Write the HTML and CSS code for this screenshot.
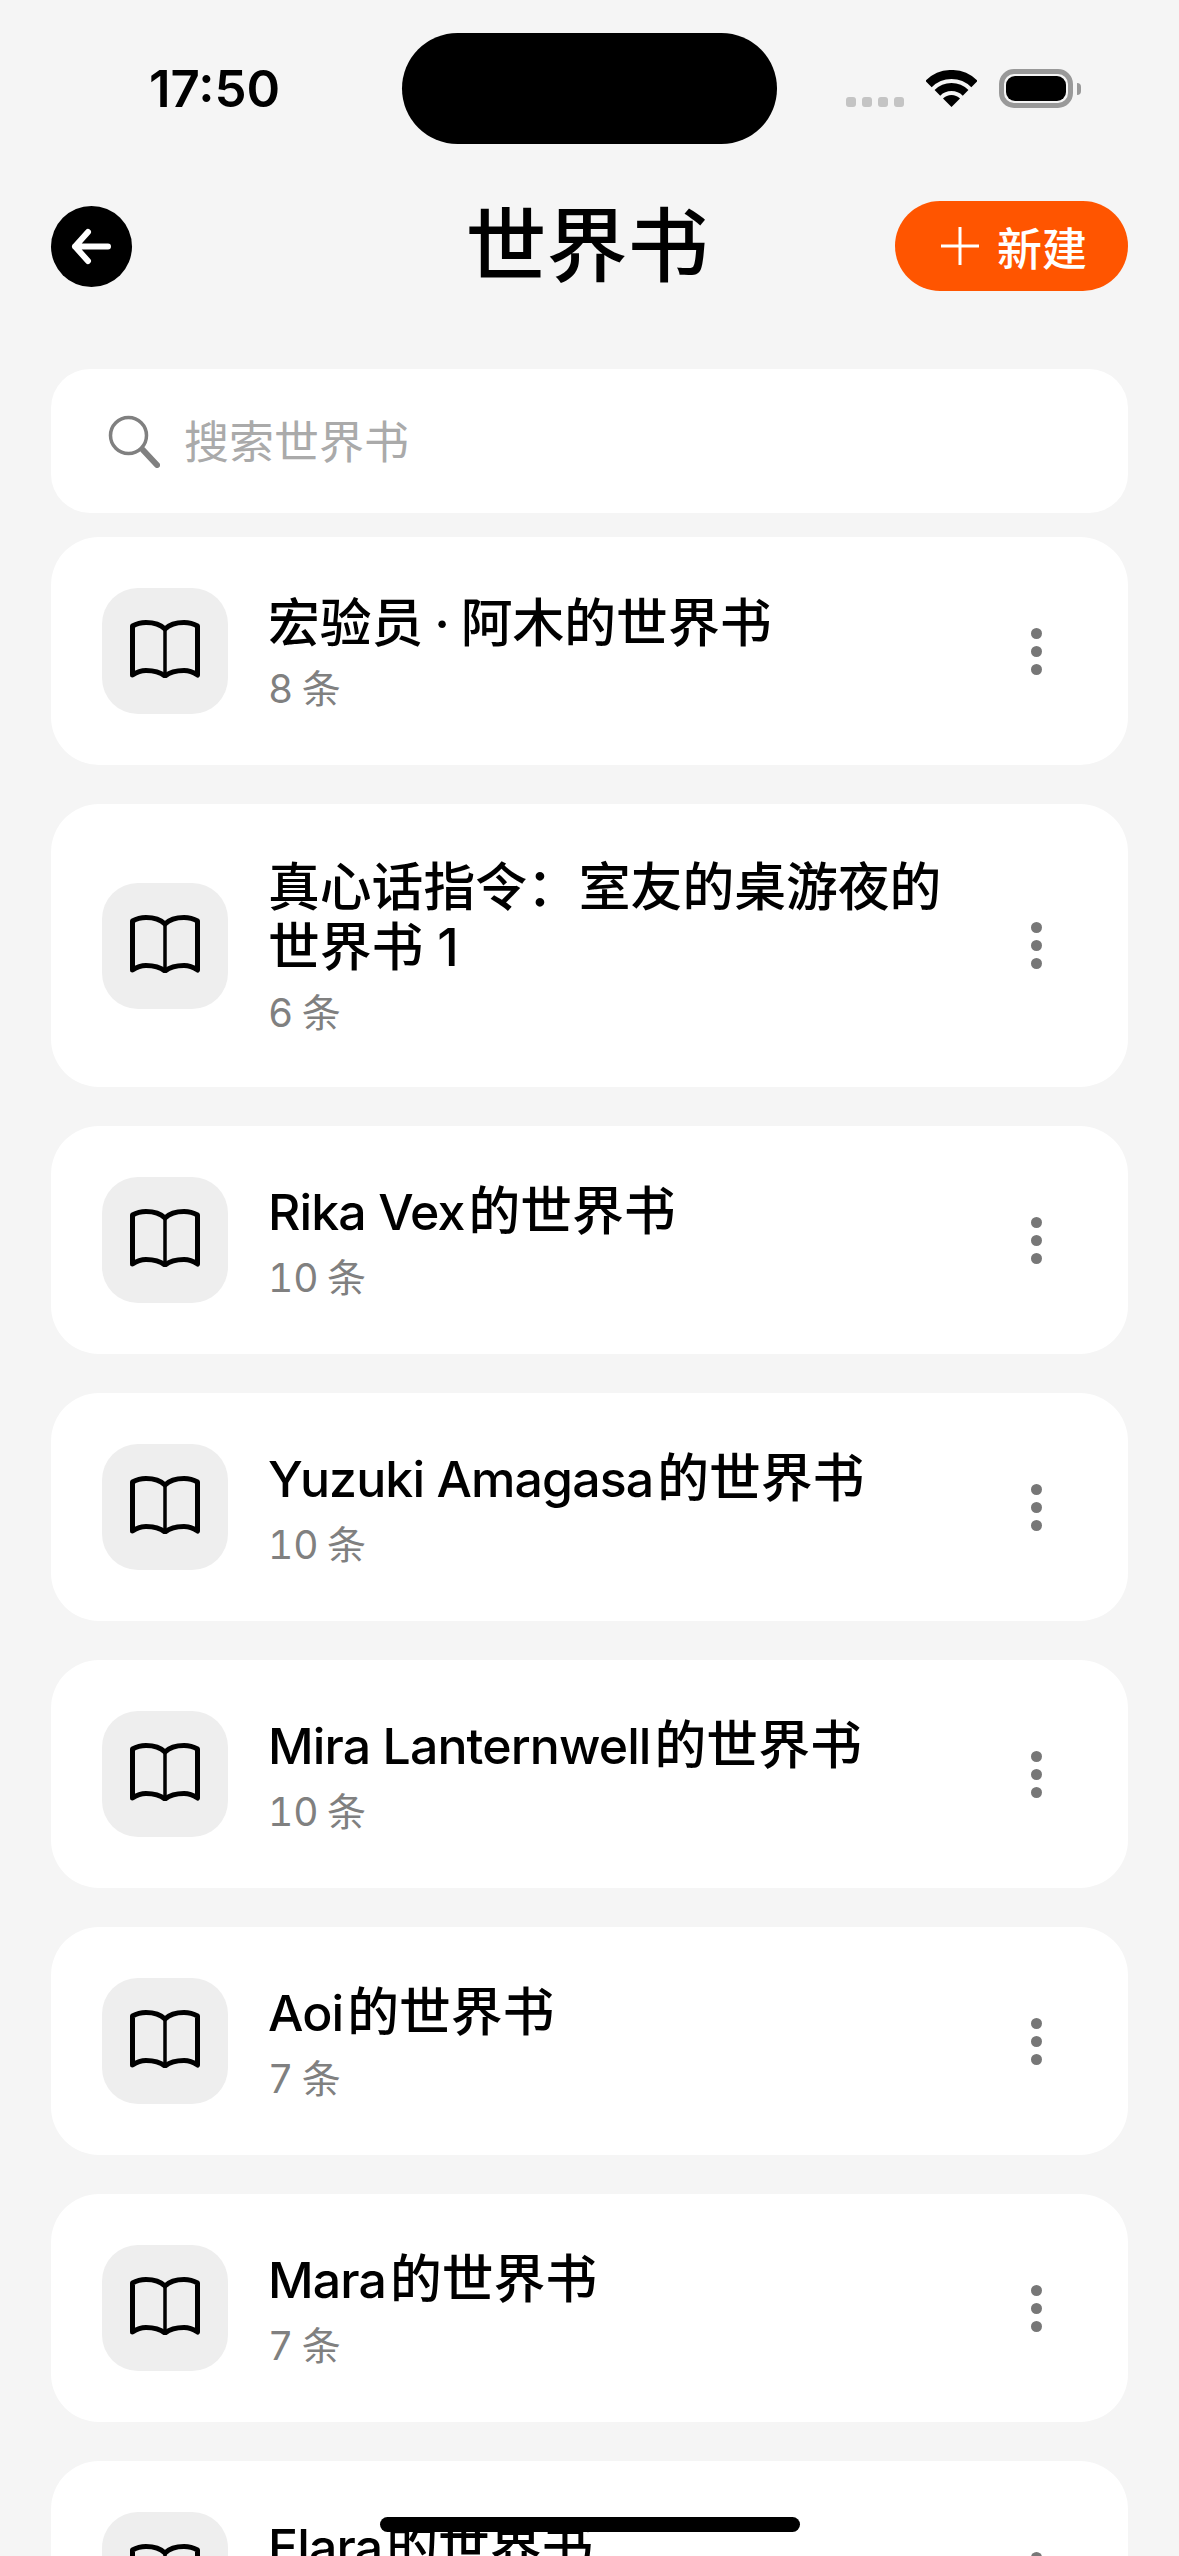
FILE: index.html
```html
<!DOCTYPE html>
<html lang="zh-CN">
<head>
    <meta charset="UTF-8">
    <title>世界书</title>
    <link rel="stylesheet" href="styles.css">
</head>
<body>
    <svg class="defs" width="0" height="0">
        <symbol id="book" viewBox="0 0 70 58">
            <path d="M35 9C30 4 22 2.5 16 2.5C11 2.5 6 4 2.5 6V55C7 52 11 50.5 16 50.5C23 50.5 30 52 35 56C40 52 47 50.5 54 50.5C59 50.5 63 52 67.5 55V6C64 4 59 2.5 54 2.5C48 2.5 40 4 35 9Z" fill="none" stroke="#000" stroke-width="5" stroke-linejoin="round"/>
            <path d="M35 9V55" fill="none" stroke="#000" stroke-width="3.5"/>
        </symbol>
    </svg>

    <div class="status-bar">
        <div class="time">17:50</div>
        <div class="island"></div>
        <div class="status-icons">
            <div class="signal"><span></span><span></span><span></span><span></span></div>
            <svg class="wifi" width="51" height="37" viewBox="0 0 51 37">
                <path d="M2.5 14A32.5 32.5 0 0 1 48.5 14" fill="none" stroke="#000" stroke-width="9"/>
                <path d="M11.4 22.9A20 20 0 0 1 39.6 22.9" fill="none" stroke="#000" stroke-width="8"/>
                <path d="M25.5 37L17 28.5A12 12 0 0 1 34 28.5Z"/>
            </svg>
            <div class="battery"><div class="battery-level"></div></div>
            <div class="battery-nub"></div>
        </div>
    </div>

    <header class="header">
        <button class="back">
            <svg width="81" height="81" viewBox="0 0 81 81">
                <path d="M57 40.5H24M37 26L24 40.5L37 55" fill="none" stroke="#fff" stroke-width="6" stroke-linecap="round" stroke-linejoin="round"/>
            </svg>
        </button>
        <h1>世界书</h1>
        <button class="new-btn">
            <svg width="38" height="38" viewBox="0 0 38 38">
                <path d="M19 0V38M0 19H38" fill="none" stroke="#fff" stroke-width="3"/>
            </svg>
            <span>新建</span>
        </button>
    </header>

    <div class="search">
        <svg width="52" height="53" viewBox="0 0 52 53">
            <circle cx="20.5" cy="20.5" r="18" fill="none" stroke="#808080" stroke-width="3.5"/>
            <path d="M35 35L49 50" fill="none" stroke="#808080" stroke-width="6" stroke-linecap="round"/>
        </svg>
        <span>搜索世界书</span>
    </div>

    <main class="list">
        <div class="card">
            <div class="book-icon"><svg><use href="#book"/></svg></div>
            <div class="info">
                <div class="name spaced">宏验员 · 阿木的世界书</div>
                <div class="count">8 条</div>
            </div>
            <div class="more"><span></span><span></span><span></span></div>
        </div>
        <div class="card">
            <div class="book-icon"><svg><use href="#book"/></svg></div>
            <div class="info">
                <div class="name">真心话指令：室友的桌游夜的世界书 1</div>
                <div class="count">6 条</div>
            </div>
            <div class="more"><span></span><span></span><span></span></div>
        </div>
        <div class="card">
            <div class="book-icon"><svg><use href="#book"/></svg></div>
            <div class="info">
                <div class="name"><span class="latin">Rika Vex</span>的世界书</div>
                <div class="count">10 条</div>
            </div>
            <div class="more"><span></span><span></span><span></span></div>
        </div>
        <div class="card">
            <div class="book-icon"><svg><use href="#book"/></svg></div>
            <div class="info">
                <div class="name"><span class="latin">Yuzuki Amagasa</span>的世界书</div>
                <div class="count">10 条</div>
            </div>
            <div class="more"><span></span><span></span><span></span></div>
        </div>
        <div class="card">
            <div class="book-icon"><svg><use href="#book"/></svg></div>
            <div class="info">
                <div class="name"><span class="latin">Mira Lanternwell</span>的世界书</div>
                <div class="count">10 条</div>
            </div>
            <div class="more"><span></span><span></span><span></span></div>
        </div>
        <div class="card">
            <div class="book-icon"><svg><use href="#book"/></svg></div>
            <div class="info">
                <div class="name"><span class="latin">Aoi</span>的世界书</div>
                <div class="count">7 条</div>
            </div>
            <div class="more"><span></span><span></span><span></span></div>
        </div>
        <div class="card">
            <div class="book-icon"><svg><use href="#book"/></svg></div>
            <div class="info">
                <div class="name"><span class="latin">Mara</span>的世界书</div>
                <div class="count">7 条</div>
            </div>
            <div class="more"><span></span><span></span><span></span></div>
        </div>
        <div class="card">
            <div class="book-icon"><svg><use href="#book"/></svg></div>
            <div class="info">
                <div class="name"><span class="latin">Elara</span>的世界书</div>
                <div class="count">7 条</div>
            </div>
            <div class="more"><span></span><span></span><span></span></div>
        </div>
    </main>

    <div class="home-bar"></div>
</body>
</html>
```

FILE: styles.css
```css
html, body {
    margin: 0;
    height: 2556px;
    overflow: hidden;
}

body {
    position: relative;
    background: #f5f5f5;
    color: #000;
    font-family: Inter, "Noto Sans CJK SC", sans-serif;
}

.defs {
    display: block;
    height: 0;
}

/* 状态栏 */
.status-bar {
    display: grid;
    grid-template-columns: 402px 375px 1fr;
    align-items: center;
    height: 111px;
    padding-top: 33px;
}

.time {
    padding-left: 149px;
    font-size: 51px;
    font-weight: 600;
    line-height: 1;
}

.island {
    height: 111px;
    border-radius: 56px;
    background: #000;
}

.status-icons {
    display: flex;
    align-items: center;
    padding-left: 69px;
}

.signal {
    display: flex;
    gap: 6px;
    align-self: flex-end;
    margin: 0 22px 1px 0;
}

.signal span {
    width: 10px;
    height: 10px;
    border-radius: 3px;
    background: #c4c4c4;
}

.wifi {
    margin-right: 22px;
}

.battery {
    box-sizing: border-box;
    width: 74px;
    height: 39px;
    padding: 2px;
    border: 5px solid #999;
    border-radius: 15px;
}

.battery-level {
    height: 100%;
    border-radius: 9px;
    background: #000;
}

.battery-nub {
    width: 4px;
    height: 12px;
    margin-left: 4px;
    border-radius: 0 4px 4px 0;
    background: #999;
}

/* 顶部导航 */
.header {
    display: grid;
    grid-template-columns: 1fr auto 1fr;
    align-items: center;
    height: 90px;
    margin-top: 57px;
    padding: 0 51px;
}

.header h1 {
    margin: 0 5px 0 0;
    font-size: 81px;
    font-weight: 500;
    line-height: 90px;
}

button {
    padding: 0;
    border: 0;
    font-family: inherit;
}

.back {
    display: flex;
    width: 81px;
    height: 81px;
    border-radius: 50%;
    background: #000;
}

.new-btn {
    display: flex;
    align-items: center;
    gap: 18px;
    justify-self: end;
    height: 90px;
    padding: 0 41px 0 46px;
    border-radius: 45px;
    background: #ff5500;
    color: #fff;
    font-size: 45px;
    font-weight: 500;
}

/* 搜索框 */
.search {
    display: flex;
    align-items: center;
    gap: 24px;
    height: 144px;
    margin: 78px 51px 24px;
    padding-left: 57px;
    border-radius: 39px;
    background: #fff;
    color: #aaa;
    font-size: 45px;
}

.search span {
    padding-bottom: 4px;
}

/* 列表 */
.list {
    display: flex;
    flex-direction: column;
    gap: 39px;
    margin: 0 51px;
}

.card {
    display: flex;
    align-items: center;
    flex-shrink: 0;
    padding: 51px 86px 51px 51px;
    border-radius: 48px;
    background: #fff;
}

.book-icon {
    display: flex;
    flex-shrink: 0;
    align-items: center;
    justify-content: center;
    width: 126px;
    height: 126px;
    margin-right: 40px;
    border-radius: 36px;
    background: #eee;
}

.book-icon svg {
    width: 70px;
    height: 58px;
    margin-bottom: 4px;
}

.info {
    flex: 1;
    margin: 2px 0 -2px;
}

.name {
    font-size: 51.8px;
    font-weight: 500;
    line-height: 60px;
}

.spaced {
    word-spacing: -3px;
}

.latin {
    margin-right: 4px;
    font-size: 50px;
    letter-spacing: -0.9px;
}

.count {
    margin-top: 11px;
    color: #808080;
    font-size: 39px;
    font-variant-numeric: tabular-nums;
    word-spacing: -2px;
    line-height: 50px;
}

.more {
    display: flex;
    flex-direction: column;
    gap: 7px;
    margin-left: 60px;
}

.more span {
    width: 11px;
    height: 11px;
    border-radius: 50%;
    background: #777;
}

.home-bar {
    position: absolute;
    left: 380px;
    top: 2517px;
    width: 420px;
    height: 15px;
    border-radius: 8px;
    background: #000;
}
```
